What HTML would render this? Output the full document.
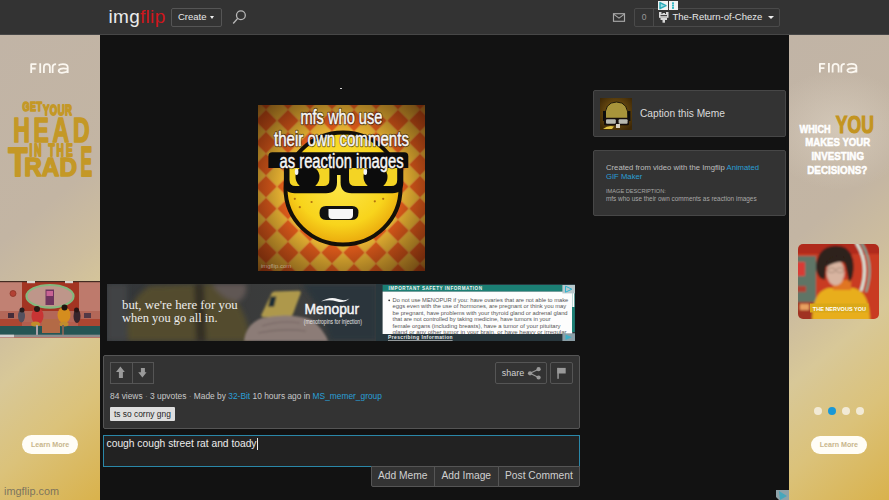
<!DOCTYPE html>
<html><head><meta charset="utf-8">
<style>
*{margin:0;padding:0;box-sizing:border-box}
html,body{width:889px;height:500px;overflow:hidden;background:#121212;font-family:"Liberation Sans",sans-serif;position:relative}
.abs{position:absolute}
.t{position:absolute;line-height:1;white-space:nowrap}
#hdr{left:0;top:0;width:889px;height:35px;background:#333;border-bottom:1px solid #474747}
.logo{left:108.5px;top:6.9px;font-size:19px;letter-spacing:0.3px;color:#ececec}
.logo span{color:#d0161c}
.btn{position:absolute;border:1px solid #555;border-radius:2px}
.tri{position:absolute;width:0;height:0;border-left:3px solid transparent;border-right:3px solid transparent;border-top:3px solid #eee}
#lad{left:0;top:35px;width:100px;height:465px;background:linear-gradient(140deg,#c1b4a6 0%,#c3b5a3 38%,#cdbd9e 52%,#d8c898 64%,#dbc27a 80%,#d9b24c 100%);overflow:hidden}
#rad{left:789px;top:35px;width:100px;height:465px;background:linear-gradient(140deg,#c1b4a6 0%,#c3b5a3 38%,#cdbd9e 52%,#d8c898 64%,#dbc27a 80%,#d9b24c 100%);overflow:hidden}
.box{position:absolute;background:#333;border:1px solid #474747;border-radius:2px}
.link{color:#2a9fd6}
.gbtn{position:absolute;background:#333;border:1px solid #555}
</style></head><body>
<div id="hdr" class="abs">
  <div class="t logo">img<span>flip</span></div>
  <div class="btn" style="left:171px;top:8px;width:51px;height:19px"><div class="t" style="left:6px;top:2.7px;font-size:9.5px;color:#e8e8e8">Create</div><div class="tri" style="left:37.8px;top:7px;border-left-width:2.75px;border-right-width:2.75px"></div></div>
  <svg class="abs" style="left:230px;top:8px" width="20" height="20" viewBox="0 0 20 20"><circle cx="10.9" cy="7.2" r="4.4" fill="none" stroke="#b8b8b8" stroke-width="1.3"/><line x1="7.7" y1="10.4" x2="3.2" y2="15.5" stroke="#b8b8b8" stroke-width="1.4"/></svg>
  <svg class="abs" style="left:612px;top:12px" width="14" height="11" viewBox="0 0 14 11"><rect x="1.5" y="1.7" width="11" height="7.6" fill="none" stroke="#a8a8a8" stroke-width="1.15"/><polyline points="1.6,2.1 7,6.1 12.4,2.1" fill="none" stroke="#a8a8a8" stroke-width="1.15"/></svg>
  <div class="btn" style="left:634px;top:8px;width:146px;height:19px;border-color:#4a4a4a"></div>
  <div class="abs" style="left:653px;top:9px;width:1px;height:17px;background:#4a4a4a"></div>
  <div class="t" style="left:641.8px;top:12.9px;font-size:8.5px;color:#999">0</div>
  <svg class="abs" style="left:658.5px;top:12px" width="11" height="11" viewBox="0 0 11 11"><g fill="#d8d8d8"><rect x="0" y="0" width="2.5" height="2.2"/><rect x="7" y="0" width="2.5" height="2.2"/><rect x="3.5" y="1" width="2.5" height="1.2"/><rect x="0" y="2" width="9.5" height="3.8"/><rect x="1.5" y="5.8" width="6.5" height="2.2"/><rect x="3.5" y="8" width="2.5" height="2.7"/></g><rect x="1.5" y="3.1" width="6.5" height="1.1" fill="#333"/></svg>
  <div class="t" style="left:672.5px;top:11.6px;font-size:9.5px;color:#e8e8e8">The-Return-of-Cheze</div>
  <div class="tri" style="left:768px;top:16px"></div>
  <div class="abs" style="left:658px;top:1px;width:10px;height:9px;background:#f2f2f2"></div>
  <div class="abs" style="left:669px;top:1px;width:9px;height:9px;background:#f2f2f2"></div>
  <svg class="abs" style="left:658px;top:1px" width="20" height="9" viewBox="0 0 20 9"><path d="M2 1.6L8 4.6L2 7.6Z" fill="#9adce4" stroke="#2aaab8" stroke-width="1.5" stroke-linejoin="round"/><rect x="14" y="1.3" width="2" height="6.6" fill="#3ab8c4"/><rect x="14" y="3.3" width="2" height=".6" fill="#bfe6ea"/><rect x="14" y="5.4" width="2" height=".6" fill="#bfe6ea"/></svg>
</div>

<!-- LEFT AD -->
<div id="lad" class="abs">
<svg class="abs" style="left:0;top:0" width="100" height="465" viewBox="0 35 100 465">
<g transform="translate(-788.7,0.3)"><g fill="none" stroke="#fbf7f0" stroke-width="1.8" stroke-linejoin="round">
<path d="M819.9 72.6 V63.9 H825.2 M819.9 68.2 H824.4 M828.9 63 V72.6 M832.6 72.6 V66.8 Q832.6 63.9 835.6 63.9 Q838.6 63.9 838.6 66.8 V72.6 M841.3 72.6 V66.8 Q841.3 63.9 844.8 63.9 M847.2 65.2 Q848.2 63.9 851.6 63.9 Q856.4 63.9 856.4 66.8 V72.6 M856.4 68.6 Q851.5 67.6 849.2 68.6 Q847 69.6 847.5 71 Q848.3 72.8 851.8 72.4 Q855.2 72 856.4 70.4"/>
</g></g>
<g font-family="Liberation Sans" font-weight="bold" fill="#c49826" stroke="#c49826" stroke-width="1.1" stroke-linejoin="round">
<text transform="translate(22.4,110.8) scale(1,1.45)" font-size="9" textLength="19.6" lengthAdjust="spacing">GET</text>
<text transform="translate(43,115) scale(1,1.6)" font-size="9.5" textLength="28.8" lengthAdjust="spacing">YOUR</text>
<text transform="translate(13.3,141.6) scale(1,1.55)" font-size="23" textLength="76.2" lengthAdjust="spacing">HEAD</text>
<text transform="translate(29.4,155.8) scale(1,1.66)" font-size="10" textLength="43.2" lengthAdjust="spacing">IN THE</text>
<text transform="translate(8.2,176.2) scale(1,1.73)" font-size="24" textLength="19.3" lengthAdjust="spacingAndGlyphs">T</text>
<text transform="translate(24.3,176.2) scale(1,1.375)" font-size="19" textLength="52.7" lengthAdjust="spacingAndGlyphs">RAD</text>
<text transform="translate(80.5,176.2) scale(1,1.75)" font-size="24" textLength="11.7" lengthAdjust="spacingAndGlyphs">E</text>
</g>
</svg>
<div class="abs" style="left:0;top:246px;width:100px;height:57px;overflow:hidden">
<svg width="100" height="57" viewBox="0 0 100 57">
<defs><filter id="vb"><feGaussianBlur stdDeviation="0.7"/></filter></defs>
<g filter="url(#vb)">
<rect x="-2" y="-2" width="104" height="61" fill="#c86a58"/>
<rect x="-2" y="-2" width="26" height="36" fill="#d89282"/>
<rect x="78" y="-2" width="26" height="36" fill="#d48a7a"/>
<rect x="22" y="1" width="57" height="30" fill="#b63a28"/>
<rect x="-2" y="-2" width="104" height="3.2" fill="#4a3226"/>
<rect x="27" y="0" width="8" height="2.2" fill="#f0f0e8"/>
<rect x="65" y="0" width="8" height="2.2" fill="#f0f0e8"/>
<circle cx="13" cy="12.5" r="3" fill="#c84a3a" stroke="#9a3a2a" stroke-width=".8"/>
<ellipse cx="50" cy="15.3" rx="23.5" ry="11.3" fill="#d4aa9c" stroke="#92d08e" stroke-width="2.2"/>
<rect x="45.5" y="8.5" width="8.5" height="15.5" fill="#7a3a6a"/>
<rect x="46.5" y="10" width="6.5" height="5" fill="#e070a8"/>
<rect x="-2" y="30" width="104" height="11" fill="#c87464"/>
<rect x="8" y="32" width="6" height="5" fill="#4a3040"/>
<rect x="84" y="32" width="7" height="5" fill="#5a4050"/>
<rect x="-2" y="38" width="24" height="10" fill="#c05038"/>
<rect x="78" y="38" width="26" height="10" fill="#c05038"/>
<rect x="-2" y="45" width="104" height="11" fill="#28605f"/>
<rect x="42" y="38" width="18" height="14" fill="#c87850"/>
<ellipse cx="37.5" cy="35" rx="6" ry="8" fill="#e03a3a"/>
<circle cx="37" cy="28" r="3" fill="#2a1a14"/>
<ellipse cx="64" cy="34" rx="6.5" ry="8" fill="#eea020"/>
<circle cx="64.5" cy="26.5" r="3" fill="#1e1410"/>
<ellipse cx="35.5" cy="43" rx="4.5" ry="2.5" fill="#d8a030"/>
<ellipse cx="64" cy="43" rx="4.5" ry="2.5" fill="#d8a030"/>
<rect x="36" y="44" width="2" height="10" fill="#c0b8c0"/>
<rect x="62" y="44" width="2" height="10" fill="#8a7060"/>
<ellipse cx="21.5" cy="35" rx="3.5" ry="6.5" fill="#5a5a6a"/>
<circle cx="22" cy="29" r="2.5" fill="#2a2020"/>
<ellipse cx="77" cy="35" rx="3.5" ry="7" fill="#3a2a30"/>
<circle cx="76.5" cy="29" r="2.5" fill="#2a1818"/>
</g>
<rect x="0" y="0" width="100" height="53.7" fill="#200808" opacity=".12"/>
<rect x="0" y="53.7" width="100" height="2.6" fill="#8c8c8c"/>
<rect x="0" y="53.7" width="14" height="2.6" fill="#d0d0d0"/>
</svg></div>
<div class="abs" style="left:22.4px;top:400px;width:55.6px;height:19px;border-radius:10px;background:#fffdf6"></div>
<div class="t" style="left:31px;top:406.8px;font-size:7.1px;font-weight:bold;color:#c8b68c">Learn More</div>
</div>
<!-- RIGHT AD -->
<div id="rad" class="abs">
<div class="abs" style="left:-30px;top:30px;width:160px;height:130px;background:radial-gradient(ellipse at center,rgba(225,215,200,.55) 0%,rgba(225,215,200,0) 65%)"></div>
<svg class="abs" style="left:0;top:0" width="100" height="465" viewBox="789 35 100 465">
<g fill="none" stroke="#fbf7f0" stroke-width="1.8" stroke-linejoin="round">
<path d="M819.9 72.6 V63.9 H825.2 M819.9 68.2 H824.4 M828.9 63 V72.6 M832.6 72.6 V66.8 Q832.6 63.9 835.6 63.9 Q838.6 63.9 838.6 66.8 V72.6 M841.3 72.6 V66.8 Q841.3 63.9 844.8 63.9 M847.2 65.2 Q848.2 63.9 851.6 63.9 Q856.4 63.9 856.4 66.8 V72.6 M856.4 68.6 Q851.5 67.6 849.2 68.6 Q847 69.6 847.5 71 Q848.3 72.8 851.8 72.4 Q855.2 72 856.4 70.4"/>
</g>
<g font-family="Liberation Sans" font-weight="bold" stroke="#fff" stroke-width=".5">
<text transform="translate(799.6,133.4) scale(1,1.0)" font-size="10.5" textLength="31" lengthAdjust="spacingAndGlyphs" fill="#fff">WHICH</text>
<text transform="translate(835.8,133.2) scale(1,0.95)" font-size="24.5" textLength="38" lengthAdjust="spacingAndGlyphs" fill="#c39420" stroke="#c39420" stroke-width="1.2">YOU</text>
<text transform="translate(805.2,146.3) scale(1,1.0)" font-size="10.5" textLength="65" lengthAdjust="spacingAndGlyphs" fill="#fff">MAKES YOUR</text>
<text transform="translate(811.4,160.3) scale(1,1.0)" font-size="10.5" textLength="52.6" lengthAdjust="spacingAndGlyphs" fill="#fff">INVESTING</text>
<text transform="translate(807.2,173.7) scale(1,1.0)" font-size="10.5" textLength="60.2" lengthAdjust="spacingAndGlyphs" fill="#fff">DECISIONS?</text>
</g>
</svg>
<div class="abs" style="left:9.3px;top:208.6px;width:81px;height:75px;border-radius:5px;overflow:hidden">
<svg width="81" height="75" viewBox="0 0 81 75">
<defs><filter id="vb2"><feGaussianBlur stdDeviation="0.9"/></filter></defs>
<g filter="url(#vb2)">
<rect x="-2" y="-2" width="86" height="79" fill="#c93a22"/>
<rect x="-2" y="-2" width="86" height="12" fill="#b02a1c"/>
<rect x="-2" y="12" width="20" height="48" fill="#5e7466"/>
<rect x="-2" y="18" width="9" height="14" fill="#d83a34"/>
<rect x="-2" y="42" width="10" height="6" fill="#b04030"/>
<rect x="-2" y="58" width="18" height="20" fill="#a03020"/>
<rect x="2" y="60" width="9" height="6" fill="#e8a060"/>
<path d="M58 -2 Q72 20 63 47" fill="none" stroke="#d8f4e8" stroke-width="2.6"/>
<path d="M63 -2 Q77 20 68 48" fill="none" stroke="#5ac0b0" stroke-width="1.6"/>
<path d="M14 78 Q14 48 30 44 L56 44 Q72 48 72 78Z" fill="#e8ae1e"/>
<path d="M35 36 L53 36 L53 46 L35 46Z" fill="#e07424"/>
<path d="M22 34 Q16 26 19 16 Q22 4 34 2 Q48 0 53 10 Q57 18 55 30 Q54 36 51 38 L48 24 Q46 14 38 14 Q30 14 28 22 L27 36Z" fill="#2e201a"/>
<ellipse cx="37.5" cy="28.5" rx="9" ry="13" fill="#d8b4a0"/>
<path d="M27 20 Q33 10 44 12 Q49 14 49 20 Q42 15 28 23Z" fill="#2e201a"/>
<rect x="30" y="24" width="7" height="4.5" rx="2" fill="none" stroke="#8a7060" stroke-width=".6"/>
<rect x="38.5" y="24" width="7" height="4.5" rx="2" fill="none" stroke="#8a7060" stroke-width=".6"/>
</g>
<rect x="12" y="59.5" width="58.5" height="9" fill="#daa818"/>
<text x="14.8" y="66.6" font-family="Liberation Sans" font-weight="bold" font-size="6.2" fill="#fff" textLength="53.2" lengthAdjust="spacingAndGlyphs">THE NERVOUS YOU</text>
</svg></div>
<div class="abs" style="left:24.5px;top:371.8px;width:8px;height:8px;border-radius:50%;background:#f2ead6"></div>
<div class="abs" style="left:38.9px;top:371.8px;width:8px;height:8px;border-radius:50%;background:#1a98d6"></div>
<div class="abs" style="left:52.8px;top:371.8px;width:8px;height:8px;border-radius:50%;background:#f2ead6"></div>
<div class="abs" style="left:66.9px;top:371.8px;width:8px;height:8px;border-radius:50%;background:#f2ead6"></div>
<div class="abs" style="left:22px;top:400.6px;width:56px;height:18.4px;border-radius:10px;background:#fffdf6"></div>
<div class="t" style="left:30.7px;top:407px;font-size:7.1px;font-weight:bold;color:#c8b68c">Learn More</div>
</div>

<!-- MAIN -->
<div class="abs" style="left:340.4px;top:87.6px;width:2px;height:1.6px;background:#d0d0d0"></div>
<div id="meme" class="abs" style="left:258px;top:105px;width:167px;height:166px;overflow:hidden">
<svg width="167" height="166" viewBox="0 0 167 166">
<defs>
<pattern id="chk" x="8" y="15.6" width="22" height="22" patternUnits="userSpaceOnUse">
<rect width="22" height="22" fill="#f4bc36"/>
<path d="M0 -11L11 0L0 11L-11 0Z M22 -11L33 0L22 11L11 0Z M0 11L11 22L0 33L-11 22Z M22 11L33 22L22 33L11 22Z" fill="#e85e1a" stroke="#f39c38" stroke-width="1.2"/>
</pattern>
<radialGradient id="vig" cx="50%" cy="50%" r="71%">
<stop offset="45%" stop-color="#000" stop-opacity="0"/>
<stop offset="100%" stop-color="#2a0800" stop-opacity=".7"/>
</radialGradient>
<radialGradient id="face" cx="48%" cy="42%" r="58%">
<stop offset="0%" stop-color="#fde84c"/>
<stop offset="70%" stop-color="#f8d41c"/>
<stop offset="100%" stop-color="#eaa80c"/>
</radialGradient>
<filter id="bl"><feGaussianBlur stdDeviation="0.7"/></filter>
<clipPath id="lensL"><path d="M31.5 63 H71.4 V75.1 Q71.4 81.1 65.4 81.1 H37.5 Q31.5 81.1 31.5 75.1 Z"/></clipPath>
<clipPath id="lensR"><path d="M91 63 H139.2 V75.1 Q139.2 81.1 133.2 81.1 H97 Q91 81.1 91 75.1 Z"/></clipPath>
</defs>
<g filter="url(#bl)"><rect x="-2" y="-2" width="171" height="170" fill="url(#chk)"/></g>
<rect width="167" height="166" fill="url(#vig)"/>
<ellipse cx="85" cy="83.5" rx="57.5" ry="56" fill="url(#face)" stroke="#141008" stroke-width="4"/>
<g fill="#0c0c0c">
<path d="M14.4 47.2 H146.3 Q150.3 47.2 150.3 51.2 V63 H10.4 V51.2 Q10.4 47.2 14.4 47.2 Z"/>
<path d="M25.9 50 H79 V77.3 Q79 88.3 68 88.3 H36.9 Q25.9 88.3 25.9 77.3 Z"/>
<path d="M82.6 50 H145.3 V77.3 Q145.3 88.3 134.3 88.3 H93.6 Q82.6 88.3 82.6 77.3 Z"/>
<rect x="76" y="50" width="10" height="20"/>
</g>
<path d="M31.5 63 H71.4 V75.1 Q71.4 81.1 65.4 81.1 H37.5 Q31.5 81.1 31.5 75.1 Z" fill="#f4d424"/>
<path d="M91 63 H139.2 V75.1 Q139.2 81.1 133.2 81.1 H97 Q91 81.1 91 75.1 Z" fill="#f4d424"/>
<g clip-path="url(#lensL)"><ellipse cx="49.5" cy="72" rx="12" ry="11.5" fill="#0c0c0c"/></g>
<g clip-path="url(#lensR)"><ellipse cx="117.5" cy="72" rx="12" ry="11.5" fill="#0c0c0c"/></g>
<ellipse cx="38.6" cy="66.8" rx="1.8" ry="3.2" fill="#f4f4f4"/>
<ellipse cx="107.3" cy="66.8" rx="1.8" ry="3.2" fill="#f4f4f4"/>
<path d="M68 101 L94 101 Q100.5 101 100.5 107.5 Q100.5 115 94 115 L68 115 Q61.5 115 61.5 108 Q61.5 101 68 101Z" fill="#111"/>
<path d="M70.5 104 L95 104 L95 110 Q95 114 91 114 L74 114 Q70.5 114 70.5 110Z" fill="#f6f6f6"/>
<g fill="#b07010"><circle cx="36.8" cy="93.8" r="1.1"/><circle cx="53.6" cy="97" r="1.1"/><circle cx="41.8" cy="102.2" r="1.1"/><circle cx="116.8" cy="96.3" r="1.1"/><circle cx="125.2" cy="93.8" r="1.1"/></g>
<g font-family="Liberation Sans" font-size="20" text-anchor="middle" stroke-linejoin="round">
<g fill="none" stroke="#1a1008" stroke-opacity=".6" stroke-width="2.4">
<text x="83.4" y="18.5" textLength="82" lengthAdjust="spacingAndGlyphs">mfs who use</text>
<text x="83.5" y="40.6" textLength="135" lengthAdjust="spacingAndGlyphs">their own comments</text>
<text x="83.6" y="63" textLength="124.3" lengthAdjust="spacingAndGlyphs">as reaction images</text>
</g>
<g fill="#f8f8f8" stroke="#f8f8f8" stroke-width=".45">
<text x="83.4" y="18.5" textLength="82" lengthAdjust="spacingAndGlyphs">mfs who use</text>
<text x="83.5" y="40.6" textLength="135" lengthAdjust="spacingAndGlyphs">their own comments</text>
<text x="83.6" y="63" textLength="124.3" lengthAdjust="spacingAndGlyphs">as reaction images</text>
</g>
</g>
<text x="3" y="163" font-family="Liberation Sans" font-size="6" fill="#fff" fill-opacity=".45">imgflip.com</text>
</svg></div>

<div id="adb" class="abs" style="left:107px;top:284px;width:468px;height:57px;overflow:hidden;background:#3e4144">
<svg width="468" height="57" viewBox="107 284 468 57">
<defs>
<filter id="ab"><feGaussianBlur stdDeviation="2.5"/></filter><filter id="ab2"><feGaussianBlur stdDeviation="1.1"/></filter>
<linearGradient id="lg1" x1="0" x2="1"><stop offset="0" stop-color="#3a3d40"/><stop offset="1" stop-color="#4a4a48"/></linearGradient>
</defs>
<rect x="107" y="284" width="270" height="57" fill="url(#lg1)"/>
<g filter="url(#ab)">
<rect x="107" y="284" width="20" height="57" fill="#4c4e50"/>
<path d="M128 341 Q124 300 150 286 L212 284 Q236 292 246 320 L252 341Z" fill="#5f5634"/>
<path d="M212 284 L246 284 Q248 298 236 302 Q220 298 212 284Z" fill="#6e6460"/>
<path d="M194 284 L204 284 L206 341 L196 341Z" fill="#3a362a"/>
<path d="M302 284 L377 284 L377 341 L330 341 Q322 310 302 284Z" fill="#303c44"/>

</g>
<g filter="url(#ab2)">
<path d="M275 291.4 L298.5 290.8 Q301.5 290.8 300.6 293.5 L293 314 Q292 316.5 289 316.6 L264 317.2 Q260.5 317.2 261.5 314.5 L271.5 293.5 Q272.5 291.5 275 291.4Z" fill="#c6ae56"/>
<path d="M270.5 296.5 L276.5 296.5 L274 306.8 L268 306.8Z" fill="#24343c"/>
<path d="M244 341 Q246 324 262 318 Q290 312 312 320 Q324 330 328 341Z" fill="#a08e88"/>
<path d="M262 326 Q280 320 300 323 M258 333 Q282 328 306 331" fill="none" stroke="#857470" stroke-width="1.2"/>
</g>
<rect x="107" y="284" width="270" height="57" fill="#000" opacity=".12"/>
<g font-family="Liberation Serif" font-size="12.6" fill="#ececec">
<text x="122" y="309.2" textLength="115.7" lengthAdjust="spacingAndGlyphs">but, we're here for you</text>
<text x="122" y="321.6" textLength="95.5" lengthAdjust="spacingAndGlyphs">when you go all in.</text>
</g>
<path d="M321 301.5 Q330 296 338 299 Q345 301.5 349.5 298.5 Q344 303.5 337 301.5 Q329 299 321 301.5Z" fill="#f4f4f4"/>
<text x="304.6" y="313.9" font-family="Liberation Sans" font-size="15" fill="#f4f4f4" stroke="#f4f4f4" stroke-width=".5" textLength="54.5" lengthAdjust="spacingAndGlyphs">Menopur</text>
<text x="303.8" y="323.6" font-family="Liberation Sans" font-size="6.8" fill="#e6e6e6" textLength="58" lengthAdjust="spacingAndGlyphs">(menotropins for injection)</text>
<rect x="376" y="284" width="199" height="57" fill="#28373d"/>
<rect x="382.6" y="285" width="190" height="6.6" fill="#1b7f74"/>
<text x="388.5" y="289.6" font-family="Liberation Sans" font-weight="bold" font-size="4.6" fill="#eef4f2" textLength="93.5" lengthAdjust="spacing">IMPORTANT SAFETY INFORMATION</text>
<rect x="382.6" y="291.6" width="189.6" height="42.4" fill="#fdfdfd"/>
<rect x="572" y="292" width="2.8" height="40" fill="#1b7f74"/>
<rect x="572.3" y="292" width="2" height="15" fill="#fff"/>
<circle cx="389.2" cy="300.3" r=".9" fill="#333"/>
<g font-family="Liberation Sans" font-size="5.6" fill="#555">
<text x="392.6" y="302" textLength="175.7" lengthAdjust="spacingAndGlyphs">Do not use MENOPUR if you: have ovaries that are not able to make</text>
<text x="392.6" y="308.4" textLength="173.6" lengthAdjust="spacingAndGlyphs">eggs even with the use of hormones, are pregnant or think you may</text>
<text x="392.6" y="314.8" textLength="175" lengthAdjust="spacingAndGlyphs">be pregnant, have problems with your thyroid gland or adrenal gland</text>
<text x="392.6" y="321.2" textLength="158" lengthAdjust="spacingAndGlyphs">that are not controlled by taking medicine, have tumors in your</text>
<text x="392.6" y="327.6" textLength="168" lengthAdjust="spacingAndGlyphs">female organs (including breasts), have a tumor of your pituitary</text>
<text x="392.6" y="334" textLength="174" lengthAdjust="spacingAndGlyphs">gland or any other tumor in your brain, or have heavy or irregular</text>
</g>
<rect x="376" y="334" width="199" height="7" fill="#28373d"/>
<text x="388" y="339.2" font-family="Liberation Sans" font-weight="bold" font-size="4.9" fill="#e8ecec" textLength="64.6" lengthAdjust="spacing">Prescribing Information</text>
<rect x="388" y="340" width="64.6" height=".6" fill="#ddd"/>
<rect x="562.4" y="285" width="12.6" height="8.4" fill="#b8c8cc"/>
<path d="M565.5 286.2 L571.8 289.2 L565.5 292.2Z" fill="none" stroke="#2bb3d0" stroke-width="1"/>
<rect x="562.4" y="333.3" width="12.6" height="7.7" fill="#8a9ea6"/>
<path d="M565.5 334.4 L571.8 337.2 L565.5 340Z" fill="#2bb3d0" opacity=".8"/>
</svg></div>

<!-- sidebar -->
<div class="box" style="left:593px;top:90px;width:193px;height:47px">
  <svg class="abs" style="left:6px;top:7px" width="32" height="32" viewBox="0 0 32 32">
<defs><radialGradient id="avbg" cx="50%" cy="45%" r="65%"><stop offset="0" stop-color="#8a6418"/><stop offset="1" stop-color="#3e2806"/></radialGradient><filter id="avb"><feGaussianBlur stdDeviation=".35"/></filter></defs>
<rect width="32" height="32" fill="url(#avbg)"/>
<g filter="url(#avb)">
<path d="M5 21 Q4 4 16.5 4 Q29 4 28 21Z" fill="#a8943a" stroke="#1e1608" stroke-width="1"/>
<rect x="3" y="13" width="3" height="10" fill="#111"/>
<rect x="27.5" y="13" width="3" height="10" fill="#111"/>
<rect x="4" y="19.8" width="25" height="7.4" rx="1.5" fill="#141008"/>
<rect x="6" y="21.3" width="9.8" height="4.5" rx="1" fill="#b8b8b0"/>
<rect x="18.6" y="21.3" width="9" height="4.5" rx="1" fill="#b8b8b0"/>
<path d="M16 26 L20 26 L20 30 L16 30Z" fill="#d8d0c0"/>
<path d="M3 31 Q8 27 14 28.5 L12 31Z" fill="#e0c040"/>
</g>
</svg>
  <div class="t" style="left:46px;top:18.1px;font-size:10.2px;color:#dadada">Caption this Meme</div>
</div>
<div class="box" style="left:593px;top:150px;width:193px;height:66px">
  <div class="t" style="left:12px;top:11.9px;font-size:7.7px;line-height:9px;color:#bdbdbd;white-space:normal;width:160px">Created from video with the Imgflip <span class="link">Animated GIF Maker</span></div>
  <div class="t" style="left:12px;top:38.4px;font-size:5.65px;color:#a8a8a8">IMAGE DESCRIPTION:</div>
  <div class="t" style="left:12px;top:44.6px;font-size:6.42px;color:#a8a8a8">mfs who use their own comments as reaction images</div>
</div>

<!-- vote box -->
<div class="box" style="left:103px;top:355px;width:477px;height:74px;border-color:#555">
  <div class="gbtn" style="left:6.3px;top:6.3px;width:22.6px;height:21.3px"></div>
  <div class="gbtn" style="left:28px;top:6.3px;width:22px;height:21.3px"></div>
  <svg class="abs" style="left:12px;top:10px" width="40" height="16" viewBox="116 366 40 16"><path d="M120.4 366.5L124.8 372H122.9V378H118.9V372H116Z" fill="#9a9a9a"/><path d="M142.4 377.4L146.6 372.3H144.9V368H140.9V372.3H138.2Z" fill="#9a9a9a"/></svg>
  
  <div class="t" style="left:6px;top:35.9px;font-size:8.4px;color:#c8c8c8">84 views <span style="color:#777">·</span> 3 upvotes <span style="color:#777">·</span> Made by <span class="link">32-Bit</span> 10 hours ago in <span class="link">MS_memer_group</span></div>
  <div class="abs" style="left:6px;top:51px;width:64.5px;height:13.7px;background:#dedede;border-radius:1px"></div>
  <div class="t" style="left:10px;top:53.9px;font-size:8.4px;color:#1e1e1e">ts so corny gng</div>
  <div class="gbtn" style="left:390.9px;top:6.3px;width:52.2px;height:21.5px;border-radius:2px"></div>
  <div class="t" style="left:397.8px;top:13.4px;font-size:8.95px;color:#d0d0d0">share</div>
  <svg class="abs" style="left:423px;top:10px" width="14" height="14" viewBox="0 0 14 14"><circle cx="11.6" cy="3.2" r="2.1" fill="#999"/><circle cx="3" cy="7.3" r="2.1" fill="#999"/><circle cx="11.6" cy="11.5" r="2.1" fill="#999"/><path d="M11.6 3.2L3 7.3L11.6 11.5" fill="none" stroke="#999" stroke-width="1.1"/></svg>
  <div class="gbtn" style="left:446.3px;top:6.3px;width:22.7px;height:21.5px;border-radius:2px"></div>
  <svg class="abs" style="left:452px;top:11px" width="12" height="13" viewBox="0 0 12 13"><rect x="1.3" y="0.9" width="1.5" height="10.9" fill="#999"/><rect x="1.3" y="0.9" width="8.4" height="5.6" fill="#999"/></svg>
</div>

<!-- comment -->
<div class="abs" style="left:103px;top:435px;width:477px;height:32px;background:#222;border:1px solid #2a87a8"></div>
<div class="t" style="left:106.6px;top:439.4px;font-size:10.26px;color:#ececec">cough cough street rat and toady</div>
<div class="abs" style="left:257px;top:438px;width:1px;height:12px;background:#eee"></div>
<div class="gbtn" style="left:371px;top:466px;width:64px;height:21px;border-radius:0 0 0 2px"></div>
<div class="gbtn" style="left:434px;top:466px;width:65px;height:21px"></div>
<div class="gbtn" style="left:498px;top:466px;width:82px;height:21px;border-radius:0 0 2px 0"></div>
<div class="t" style="left:378px;top:470.6px;font-size:10.26px;color:#d0d0d0">Add Meme</div>
<div class="t" style="left:441.5px;top:470.6px;font-size:10.26px;color:#d0d0d0">Add Image</div>
<div class="t" style="left:505px;top:470.6px;font-size:10.26px;color:#d0d0d0">Post Comment</div>

<svg class="abs" style="left:776px;top:490px" width="13" height="10" viewBox="0 0 13 10"><rect width="13" height="10" fill="#8fa2a8"/><path d="M3 1 L11 6 L4 10 Z" fill="#3aa8c0" opacity=".85"/><path d="M0 7 L3 10 L0 10Z" fill="#121212"/></svg>
<div class="t" style="left:4px;top:485.7px;font-size:10.9px;color:rgba(90,90,90,.75)">imgflip.com</div>
</body></html>
